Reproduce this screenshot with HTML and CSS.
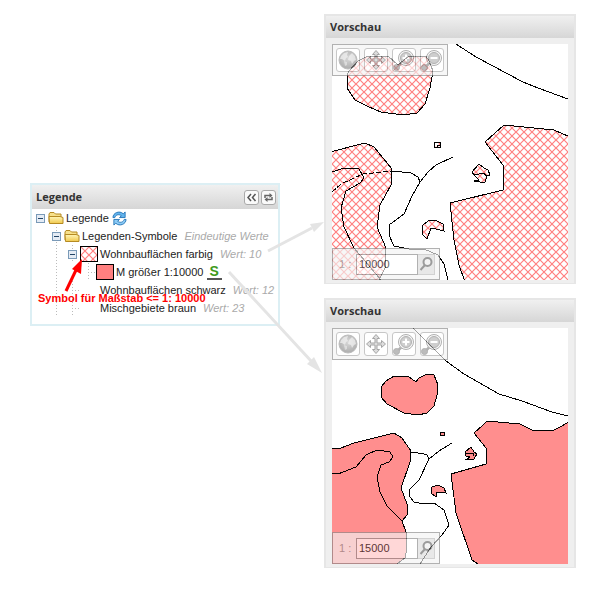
FILE: index.html
```html
<!DOCTYPE html>
<html lang="de">
<head>
    <meta charset="UTF-8">
    <meta name="viewport" content="width=device-width, initial-scale=1.0">
    <title>Legende und Vorschau</title>
    <link rel="stylesheet" href="styles.css">
</head>
<body>
    <!-- shared icons -->
    <svg class="defs" width="0" height="0" aria-hidden="true">
        <defs>
            <pattern id="hatch" width="8" height="8" patternUnits="userSpaceOnUse">
                <path d="M-1 -1L9 9M9 -1L-1 9" stroke="#ff8080" stroke-width="1.200" fill="none"/>
            </pattern>
            <linearGradient id="folderFill" x1="0" y1="0" x2="0" y2="1">
                <stop offset="0" stop-color="#fff6b8"/>
                <stop offset="1" stop-color="#f0c84c"/>
            </linearGradient>
            <radialGradient id="globeFill" cx="0.5" cy="0.4" r="0.7">
                <stop offset="0" stop-color="#c4c4c4"/>
                <stop offset="1" stop-color="#777"/>
            </radialGradient>
            <symbol id="folder" viewBox="0 0 16 14">
                <path d="M1 11V3l1-1.500h4L7.500 3H13v3" fill="#f7e08a" stroke="#b58a22"/>
                <path d="M1.500 12.500L1 5.500h11l3 1v6z" fill="url(#folderFill)" stroke="#b58a22"/>
            </symbol>
            <symbol id="globe" viewBox="0 0 22 22">
                <circle cx="11" cy="11" r="9" fill="url(#globeFill)" stroke="#999"/>
                <path d="M4 7l3-3 4-1-1 3 1 2-2 1-1 3-3-2-2 0zM12 7l3-3 3 3 1 4-2 1-2 3-1-3-3-1z" fill="#eee" opacity="0.7"/>
                <path d="M7 12l3 1 0 3-2 1z" fill="#e4e4e4" opacity="0.6"/>
            </symbol>
            <symbol id="move" viewBox="0 0 22 22">
                <path d="M11 1.500l3.500 4h-2.500v4.500h4.500V7.500l4 3.500-4 3.500v-2.500H12v4.500h2.500l-3.500 4-3.500-4H10V12H5.500v2.500l-4-3.500 4-3.500V10H10V5.500H7.500z" fill="#ccc" stroke="#777"/>
            </symbol>
            <symbol id="lens" viewBox="0 0 22 22">
                <path d="M8.500 14L5 17.500" stroke="#888" stroke-width="2.500"/>
                <circle cx="3.500" cy="18.500" r="3" fill="#999" stroke="#888"/>
                <circle cx="13" cy="9" r="7.500" fill="#f4f4f4" stroke="#888"/>
                <circle cx="13" cy="9" r="5.500" fill="#b4b4b4" stroke="#888"/>
            </symbol>
            <symbol id="zoomIn" viewBox="0 0 22 22">
                <use href="#lens" width="22" height="22"/>
                <path d="M9.500 9h7M13 5.500v7" stroke="#fff" stroke-width="2"/>
            </symbol>
            <symbol id="zoomOut" viewBox="0 0 22 22">
                <use href="#lens" width="22" height="22"/>
                <path d="M9.500 9h7" stroke="#fff" stroke-width="2"/>
            </symbol>
            <symbol id="search" viewBox="0 0 16 16">
                <circle cx="9.500" cy="6" r="4" fill="#eee" stroke="#666" stroke-width="2"/>
                <path d="M7 9l-4.500 5" stroke="#666" stroke-width="2"/>
            </symbol>
        </defs>
    </svg>

    <main class="stage">
        <section class="panel legend">
            <header class="panel-header">
                <h2>Legende</h2>
                <div class="tools">
                    <button type="button" class="tool" aria-label="Einklappen">
                        <svg viewBox="0 0 13 13"><path d="M6 3L3 6.500 6 10M10.500 3l-3 3.500 3 3.500" fill="none" stroke="#555" stroke-width="1.500"/></svg>
                    </button>
                    <button type="button" class="tool" aria-label="Aktualisieren">
                        <svg viewBox="0 0 13 13"><path d="M3 7V4.500h5M10 6v2.500H5" fill="none" stroke="#666" stroke-width="1.500"/><path d="M7.500 2v5l3-2.500zM5.500 6v5l-3-2.500z" fill="#666"/></svg>
                    </button>
                </div>
            </header>
            <ul class="tree">
                <li>
                    <div class="row root">
                        <button type="button" class="toggle" aria-label="Legende zuklappen"></button>
                        <svg class="folder"><use href="#folder"/></svg>
                        <span class="label">Legende</span>
                        <svg class="icon" viewBox="0 0 16 16">
                            <path d="M1 7c0-5 7-8 11-4l2-2v6H8l2-2C7 3 4 4 3 7z" fill="#64b5ee" stroke="#2876b8"/>
                            <path d="M15 9c0 5-7 8-11 4l-2 2V9h6l-2 2c3 2 6 1 7-2z" fill="#8dccf6" stroke="#2876b8"/>
                        </svg>
                    </div>
                    <ul>
                        <li>
                            <div class="row">
                                <button type="button" class="toggle" aria-label="Legenden-Symbole zuklappen"></button>
                                <svg class="folder"><use href="#folder"/></svg>
                                <span class="label">Legenden-Symbole</span>
                                <em>Eindeutige Werte</em>
                            </div>
                            <ul class="branch">
                                <li>
                                    <div class="row">
                                        <button type="button" class="toggle" aria-label="Wohnbauflächen farbig zuklappen"></button>
                                        <svg class="swatch"><rect width="100%" height="100%" fill="url(#hatch)"/></svg>
                                        <span class="label">Wohnbauflächen farbig</span>
                                        <em>Wert: 10</em>
                                    </div>
                                    <ul>
                                        <li>
                                            <div class="row leaf">
                                                <span class="swatch filled"></span>
                                                <span class="label">M größer 1:10000</span>
                                                <span class="scale-mark">S</span>
                                            </div>
                                        </li>
                                    </ul>
                                </li>
                                <li>
                                    <div class="row leaf">
                                        <span class="blank"></span>
                                        <span class="label">Wohnbauflächen schwarz</span>
                                        <em>Wert: 12</em>
                                    </div>
                                </li>
                                <li>
                                    <div class="row leaf">
                                        <span class="blank"></span>
                                        <span class="label">Mischgebiete braun</span>
                                        <em>Wert: 23</em>
                                    </div>
                                </li>
                            </ul>
                        </li>
                    </ul>
                </li>
            </ul>
            <p class="note">Symbol für Maßstab &lt;= 1: 10000</p>
        </section>

        <div class="previews">
            <section class="panel preview">
                <header class="panel-header"><h2>Vorschau</h2></header>
                <div class="map">
                    <svg class="drawing" viewBox="0 0 236 236">
                        <g class="area hatched">
                            <path d="M15 31V44L23 56 37 63 49 68 71 71 85 69 93 60 98 44 101 27 97 17 94 12H77L66 21 56 12 34 13 26 17 17 27z"/>
                            <path d="M-2 108L33 99 42 103 60 125 59 141 48 161 45 183 54 204 53 224 46 238H-2z"/>
                            <path d="M238 93L222 86 172 81 153 98 171 121V146L118 159 122 196 127 221 133 238H238z"/>
                            <path d="M90 190L91 181 96 177 103 176 111 180 112 187 104 185 99 184 95 195z"/>
                            <path d="M140 128L147 120 152 124 156 126 158 131 155 132 153 138H148L142 137 147 136 142 131z"/>
                            <path d="M102 98h6v5h-6z"/>
                        </g>
                        <g class="line">
                            <path d="M124 0L144 13 191 38 206 44 236 55"/>
                            <path d="M0 128L12 124 27 125 32 134 28 139 14 147 9 164 12 183 22 204 49 236"/>
                            <path d="M0 148L9 140 31 130 60 127" stroke-dasharray="5 2"/>
                            <path d="M60 127L79 129 86 133 88 138"/>
                            <path d="M121 113L104 121 96 128 88 138 80 152 72 170 57 181V191L62 202 77 205H92L106 211 112 220 116 236"/>
                            <path d="M142 131L152 129 155 133M142 137h6M105 103v-2h3"/>
                        </g>
                    </svg>
                    <div class="toolbar">
                        <button type="button" aria-label="Gesamtansicht"><svg><use href="#globe"/></svg></button>
                        <button type="button" aria-label="Verschieben"><svg><use href="#move"/></svg></button>
                        <button type="button" aria-label="Vergrößern"><svg><use href="#zoomIn"/></svg></button>
                        <button type="button" aria-label="Verkleinern"><svg><use href="#zoomOut"/></svg></button>
                    </div>
                    <form class="scale">
                        <label for="scale1">1 :</label>
                        <input type="text" id="scale1" value="10000">
                        <button type="button" aria-label="Maßstab setzen"><svg><use href="#search"/></svg></button>
                    </form>
                </div>
            </section>

            <section class="panel preview">
                <header class="panel-header"><h2>Vorschau</h2></header>
                <div class="map">
                    <svg class="drawing" viewBox="0 0 236 236">
                        <g class="area solid">
                            <path d="M49 59V69L55 76 72 85 86 87 95 85 102 78 105 67 106 57 102 47 95 46 87 50 84 54 76 48H62L54 53z"/>
                            <path d="M-2 121L9 120 22 115 62 105 70 110 79 123 78 134 69 160 75 176V187L70 193 74 204 75 220 73 230 62 238H-2z"/>
                            <path d="M238 93L230 98 220 103 200 102 188 96 155 93 150 98 142 105 154 120V136L119 146 124 185 140 232 149 238H238z"/>
                            <path d="M99 165L100 159 106 157 112 160 114 165 109 164H105L104 169z"/>
                            <path d="M133 124L139 119 142 124 145 126 142 131H135L138 129 134 128z"/>
                            <path d="M108 104h4v3h-4z"/>
                        </g>
                        <g class="line">
                            <path d="M81 0L114 33 132 46 167 66 190 73 220 84 236 88"/>
                            <path d="M0 145L6 146 24 139 34 127 45 122 58 124 61 129 57 134 49 137 45 149 48 164 55 178 70 193"/>
                            <path d="M79 124L92 126 95 127 97 131"/>
                            <path d="M120 115L107 123 97 131 87 152 77 162 78 169 82 174 92 176 102 175 112 182 117 197 110 207 99 219 88 236"/>
                            <path d="M134 126L141 125 142 128M135 131h4"/>
                        </g>
                    </svg>
                    <div class="toolbar">
                        <button type="button" aria-label="Gesamtansicht"><svg><use href="#globe"/></svg></button>
                        <button type="button" aria-label="Verschieben"><svg><use href="#move"/></svg></button>
                        <button type="button" aria-label="Vergrößern"><svg><use href="#zoomIn"/></svg></button>
                        <button type="button" aria-label="Verkleinern"><svg><use href="#zoomOut"/></svg></button>
                    </div>
                    <form class="scale">
                        <label for="scale2">1 :</label>
                        <input type="text" id="scale2" value="15000">
                        <button type="button" aria-label="Maßstab setzen"><svg><use href="#search"/></svg></button>
                    </form>
                </div>
            </section>
        </div>

        <!-- arrows over the panels -->
        <svg class="arrows" viewBox="0 0 600 600" aria-hidden="true">
            <g stroke="#e4e4e4" stroke-width="3" fill="#e4e4e4">
                <path d="M268 251L312 228"/>
                <path d="M229 272L312 362"/>
                <path d="M324 222L310 224 314 232zM322 373L307 364 314 357z" stroke="none"/>
            </g>
            <path d="M66 291L77 268" stroke="#f00" stroke-width="3"/>
            <path d="M82 259L72 269 81 274z" fill="#f00"/>
        </svg>
    </main>
</body>
</html>
```
FILE: styles.css
```css
* {
    box-sizing: border-box;
}

body {
    margin: 0;
    background-color: white;
    font-family: "Liberation Sans", Arial, sans-serif;
    font-size: 11px;
    color: #222;
}

button {
    padding: 0;
    cursor: pointer;
}

.defs {
    position: absolute;
}

.stage {
    position: relative;
    display: grid;
    grid-template-columns: minmax(0, 250fr) minmax(0, 252fr);
    gap: 44px;
    align-items: start;
    padding: 14px 24px 32px 30px;
}

.panel {
    border: 2px solid #e6e6e6;
}

.panel-header {
    display: flex;
    align-items: center;
    justify-content: space-between;
    height: 24px;
    padding: 0 2px 0 4px;
    background: linear-gradient(#f0f0f0, #d6d6d6);
}

.panel-header h2 {
    margin: 0;
    font-family: "Open Sans", sans-serif;
    font-size: 11px;
    line-height: 16px;
    color: #333;
}

/* Legend */
.legend {
    position: relative;
    margin-top: 169px;
    padding-bottom: 7px;
    border-color: #dceff4;
}

.tools {
    display: flex;
    gap: 2px;
}

.tool {
    width: 15px;
    height: 15px;
    border: 1px solid #aaa;
    border-radius: 3px;
    background-color: #fafafa;
}

.tool svg {
    display: block;
    width: 13px;
    height: 13px;
}

.tree,
.tree ul {
    margin: 0;
    padding: 0;
    list-style: none;
}

.tree {
    padding-left: 4px;
}

.tree ul {
    padding-left: 16px;
}

.tree .branch {
    background: repeating-linear-gradient(#bbb 0 1px, transparent 1px 3px) 4px 0 / 1px 100% no-repeat;
}

.row {
    display: flex;
    align-items: center;
    height: 18px;
    white-space: nowrap;
    background: repeating-linear-gradient(#bbb 0 1px, transparent 1px 3px) 4px 0 / 1px 100% no-repeat;
}

.root {
    background: none;
}

.row > * {
    flex-shrink: 0;
}

.toggle {
    width: 9px;
    height: 9px;
    margin-right: 3px;
    border: 1px solid #7a9ab8;
    background: linear-gradient(#246, #246) center / 5px 1px no-repeat, #e4ebf4;
}

.leaf::before {
    content: "";
    width: 8px;
    height: 1px;
    margin-left: 4px;
    background: repeating-linear-gradient(90deg, #bbb 0 1px, transparent 1px 3px);
}

.folder {
    width: 16px;
    height: 14px;
}

.swatch,
.blank {
    width: 18px;
    height: 16px;
}

.swatch {
    border: 1px solid #000;
    background-color: white;
    shape-rendering: crispEdges;
}

.filled {
    background-color: #ff8080;
}

.label {
    margin-left: 2px;
}

.row em {
    margin-left: 7px;
    color: #aaa;
}

.icon {
    width: 15px;
    height: 15px;
    margin-left: 3px;
}

.scale-mark {
    margin-left: 4px;
    padding: 0 3px 0 2px;
    border-bottom: 2px solid #555;
    font-size: 14px;
    line-height: 13px;
    font-weight: bold;
    color: #3f9a1c;
}

.note {
    position: absolute;
    left: 6px;
    top: 106px;
    margin: 0;
    font-size: 11px;
    line-height: 14px;
    font-weight: bold;
    white-space: nowrap;
    color: #f00;
}

/* Previews */
.previews {
    display: grid;
    gap: 14px;
}

.preview {
    border-bottom-width: 1px;
    background-color: #efefef;
}

.preview .panel-header {
    height: 22px;
}

.map {
    position: relative;
    margin: 6px 6px 3px;
    background-color: white;
}

.drawing {
    display: block;
    width: 100%;
    height: auto;
    shape-rendering: crispEdges;
}

.area,
.line {
    stroke: #000;
    stroke-width: 1;
}

.line {
    fill: none;
}

.hatched {
    fill: url(#hatch);
}

.solid {
    fill: #ff8e8e;
}

.toolbar,
.scale {
    position: absolute;
    left: 0;
    display: flex;
    align-items: center;
    height: 32px;
    border: 1px solid #888;
    background-color: #f4f4f4;
    opacity: 0.65;
}

.toolbar {
    top: 0;
    gap: 4px;
    padding: 3px;
}

.toolbar button {
    width: 24px;
    height: 24px;
    border: 1px solid #aaa;
    border-radius: 3px;
    background-color: #fff;
}

.toolbar svg {
    display: block;
    width: 22px;
    height: 22px;
}

.scale {
    bottom: 0;
    padding: 0 4px 0 6px;
}

.scale label {
    width: 17px;
    white-space: nowrap;
    color: #888;
}

.scale input {
    width: 62px;
    height: 21px;
    padding: 0 2px;
    border: 1px solid #888;
    font-family: inherit;
    font-size: 11px;
    color: #000;
}

.scale button {
    width: 17px;
    height: 21px;
    border: 1px solid #bbb;
    border-left: 0;
    background-color: #ddd;
}

.scale svg {
    display: block;
    width: 16px;
    height: 16px;
}

.arrows {
    position: absolute;
    left: 0;
    top: 0;
    width: 600px;
    height: 600px;
    pointer-events: none;
}
```
